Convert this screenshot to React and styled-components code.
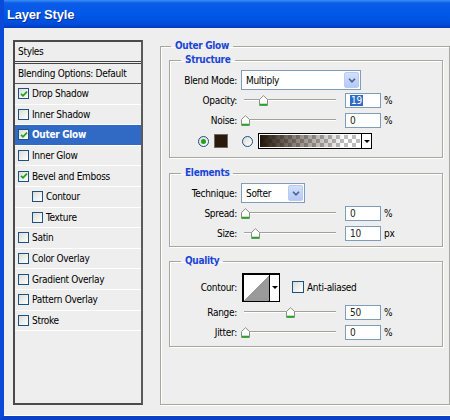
import styled, { createGlobalStyle } from "styled-components";

const GlobalStyle = createGlobalStyle`
  html, body {
    margin: 0;
    padding: 0;
    background: #eeeeee;
  }
  body {
    font-family: "DejaVu Sans Condensed", "DejaVu Sans", sans-serif;
    font-stretch: condensed;
    font-size: 10px;
    letter-spacing: -0.3px;
    color: #000;
  }
  * {
    box-sizing: border-box;
  }
`;

const Window = styled.div`
  width: 450px;
  height: 420px;
  display: flex;
  flex-direction: column;
  background: #eeeeee;
  border-left: 4px solid #0b4ad8;
  border-bottom: 4px solid #0a3fc8;
  overflow: hidden;
`;

const TitleBar = styled.div`
  flex: none;
  height: 28px;
  margin-left: -4px;
  padding-left: 7px;
  display: flex;
  align-items: center;
  background: linear-gradient(
    #3d8ff8 0,
    #0b5ce9 3px,
    #0058e6 55%,
    #004ad9 88%,
    #003bbd 100%
  );
  color: #fff;
  font-family: "Liberation Sans", sans-serif;
  font-stretch: normal;
  font-weight: bold;
  font-size: 13px;
  letter-spacing: -0.2px;
  text-shadow: 1px 1px 0 #0a2f9a;
`;

const Body = styled.div`
  flex: 1;
  display: flex;
  align-items: flex-start;
  padding: 11px 0 0 9px;
  border-bottom: 1px solid #fff;
`;

/* ---- left styles list ---- */

const StylesList = styled.div`
  width: 130px;
  height: 365px;
  margin-top: 1px;
  border: 2px solid #4a4a4a;
  border-right-color: #5a5a5a;
  background: #eeeeee;
`;

const ListHeader = styled.div`
  height: 22px;
  padding-left: 3px;
  display: flex;
  align-items: center;
  border-bottom: 3px double #444;
`;

const BlendRow = styled.div`
  height: 20px;
  padding-left: 3px;
  display: flex;
  align-items: center;
  border-bottom: 1px solid #555;
`;

const StyleRow = styled.div`
  height: 20.6px;
  display: flex;
  align-items: center;
  gap: 3px;
  padding-left: ${(p) => (p.$indent ? 17 : 3)}px;
  border-bottom: 1px solid #fff;
  background: ${(p) => (p.$selected ? "#316ac5" : "transparent")};
  color: ${(p) => (p.$selected ? "#fff" : "#000")};
  font-weight: ${(p) => (p.$selected ? "bold" : "normal")};
`;

const Box = styled.span`
  flex: none;
  width: ${(p) => p.$size || 11}px;
  height: ${(p) => p.$size || 11}px;
  border: 1px solid #1c5180;
  background: linear-gradient(135deg, #dcdcd6, #fff);
  display: flex;
  align-items: center;
  justify-content: center;
`;

const Check = ({ on, size }) => (
  <Box $size={size}>
    {on && (
      <svg width="8" height="8" viewBox="0 0 8 8">
        <path d="M1 3.8 L3 5.8 L7 1.6" fill="none" stroke="#21a121" strokeWidth="1.8" />
      </svg>
    )}
  </Box>
);

/* ---- right panel ---- */

const Group = styled.fieldset`
  margin: ${(p) => p.$top || 0}px 0 0 0;
  padding: 0 ${(p) => p.$padR || 0}px ${(p) => p.$padB || 0}px ${(p) => p.$padL || 0}px;
  min-width: 0;
  border: 1px solid #a7a7a2;
  box-shadow: inset 1px 1px 0 #fff, 1px 1px 0 #fff;
`;

const OuterGroup = styled(Group)`
  flex: none;
  width: 290px;
  height: 366px;
  margin-left: 17px;
`;

const Legend = styled.legend`
  margin-left: ${(p) => p.$offset}px;
  padding: 0 4px;
  line-height: 14px;
  font-size: 10px;
  font-weight: bold;
  color: #1b45d6;
`;

const Row = styled.div`
  height: ${(p) => p.$h || 20}px;
  display: flex;
  align-items: center;
`;

const Label = styled.span`
  width: 67px;
  margin-right: 4px;
  text-align: right;
  white-space: nowrap;
`;

const Combo = styled.div`
  width: ${(p) => p.$w}px;
  height: 20px;
  display: flex;
  align-items: center;
  justify-content: space-between;
  padding-left: 4px;
  border: 1px solid #7f9db9;
  background: #fff;
`;

const ComboButton = styled.span`
  width: 15px;
  height: 16px;
  margin-right: 1px;
  border-radius: 2px;
  border: 1px solid #b9cbf3;
  background: linear-gradient(#d2e0fc, #b4c9f5);
  display: flex;
  align-items: center;
  justify-content: center;
`;

const Chevron = () => (
  <svg width="8" height="5" viewBox="0 0 8 5">
    <path d="M1 0.8 L4 3.8 L7 0.8" fill="none" stroke="#4d6185" strokeWidth="1.6" />
  </svg>
);

const Slider = styled.div`
  position: relative;
  width: 100px;
  height: 20px;

  &::before {
    content: "";
    position: absolute;
    left: 3px;
    right: 5px;
    top: 9px;
    height: 1px;
    background: #a2a29c;
    border-bottom: 1px solid #fff;
    box-sizing: content-box;
  }
`;

const Thumb = styled.svg`
  position: absolute;
  top: 5px;
  left: ${(p) => 4 + p.$pos * 91 - 4.5}px;
`;

const SliderThumb = ({ pos }) => (
  <Thumb $pos={pos} width="9" height="11" viewBox="0 0 9 11">
    <path d="M0.5 10.5 V4.5 L4.5 0.7 L8.5 4.5 V10.5 Z" fill="#fff" stroke="#8d8d88" />
    <path d="M1 9.6 H8" stroke="#1faa1f" strokeWidth="1.8" />
  </Thumb>
);

const NumberBox = styled.div`
  width: 36px;
  height: 15px;
  margin-left: 4px;
  padding-left: 4px;
  border: 1px solid #7f9db9;
  background: #fff;
  display: flex;
  align-items: center;
  color: #222;
`;

const Selected = styled.span`
  background: #316ac5;
  color: #fff;
  padding: 0 1px;
`;

const Unit = styled.span`
  margin-left: 3px;
`;

const SliderRow = ({ label, pos, value, unit, selected }) => (
  <Row>
    <Label>{label}</Label>
    <Slider>
      <SliderThumb pos={pos} />
    </Slider>
    <NumberBox>{selected ? <Selected>{value}</Selected> : value}</NumberBox>
    <Unit>{unit}</Unit>
  </Row>
);

const ColorRow = styled(Row)`
  height: 22px;
  padding-left: 28px;
`;

const Radio = styled.span`
  flex: none;
  width: 11px;
  height: 11px;
  border-radius: 50%;
  border: 1px solid #1c5180;
  background: linear-gradient(135deg, #dcdcd6, #fff);
  margin-right: ${(p) => p.$gap}px;
  display: flex;
  align-items: center;
  justify-content: center;

  &::after {
    content: "";
    width: 5px;
    height: 5px;
    border-radius: 50%;
    background: ${(p) => (p.$on ? "#21a121" : "transparent")};
  }
`;

const Swatch = styled.span`
  width: 14px;
  height: 14px;
  margin-right: 14px;
  background: #2b1a0c;
  border: 1px solid #6d6a64;
`;

const GradientPicker = styled.div`
  width: 114px;
  height: 16px;
  display: flex;
  border: 1px solid #000;
`;

const GradientFill = styled.div`
  flex: 1;
  border: 1px solid #fff;
  background: linear-gradient(to right, #21150a 0%, rgba(43, 26, 12, 0.55) 35%, rgba(43, 26, 12, 0) 85%),
    repeating-conic-gradient(#bdbdbd 0 25%, #fff 0 50%) 0 0 / 8px 8px;
`;

const PickerArrow = styled.div`
  width: 10px;
  border-left: 1px solid #000;
  background: #fff;
  display: flex;
  align-items: center;
  justify-content: center;

  &::after {
    content: "";
    border-left: 3px solid transparent;
    border-right: 3px solid transparent;
    border-top: 3px solid #000;
  }
`;

const ContourPicker = styled.div`
  width: 38px;
  height: 29px;
  margin-left: 1px;
  display: flex;
  border: 1px solid #000;
  border-top-width: 2px;
  border-left-width: 2px;
`;

const ContourPreview = styled.div`
  flex: 1;
  background: linear-gradient(to top left, #9a9a9a 50%, #fff 50%);
`;

const ContourArrow = styled(PickerArrow)`
  align-items: flex-start;
  padding-top: 11px;
`;

const AntiAlias = styled.label`
  display: flex;
  align-items: center;
  gap: 3px;
  margin-left: 12px;
`;

const styleItems = [
  { name: "Drop Shadow", on: true },
  { name: "Inner Shadow" },
  { name: "Outer Glow", on: true, selected: true },
  { name: "Inner Glow" },
  { name: "Bevel and Emboss", on: true },
  { name: "Contour", indent: true },
  { name: "Texture", indent: true },
  { name: "Satin" },
  { name: "Color Overlay" },
  { name: "Gradient Overlay" },
  { name: "Pattern Overlay" },
  { name: "Stroke" },
];

export default function App() {
  return (
    <>
      <GlobalStyle />
      <Window>
        <TitleBar>Layer Style</TitleBar>
        <Body>
          <StylesList>
            <ListHeader>Styles</ListHeader>
            <BlendRow>Blending Options: Default</BlendRow>
            {styleItems.map((s) => (
              <StyleRow key={s.name} $indent={s.indent} $selected={s.selected}>
                <Check on={s.on} />
                {s.name}
              </StyleRow>
            ))}
          </StylesList>

          <OuterGroup $padL={8} $padR={6}>
            <Legend $offset={2}>Outer Glow</Legend>

            <Group $padB={5}>
              <Legend $offset={11}>Structure</Legend>
              <Row style={{ marginTop: 3 }}>
                <Label>Blend Mode:</Label>
                <Combo $w={120}>
                  Multiply
                  <ComboButton>
                    <Chevron />
                  </ComboButton>
                </Combo>
              </Row>
              <SliderRow label="Opacity:" pos={0.2} value="19" unit="%" selected />
              <SliderRow label="Noise:" pos={0} value="0" unit="%" />
              <ColorRow>
                <Radio $on $gap={5} />
                <Swatch />
                <Radio $gap={5} />
                <GradientPicker>
                  <GradientFill />
                  <PickerArrow />
                </GradientPicker>
              </ColorRow>
            </Group>

            <Group $top={8} $padB={3}>
              <Legend $offset={11}>Elements</Legend>
              <Row style={{ marginTop: 3 }}>
                <Label>Technique:</Label>
                <Combo $w={64}>
                  Softer
                  <ComboButton>
                    <Chevron />
                  </ComboButton>
                </Combo>
              </Row>
              <SliderRow label="Spread:" pos={0} value="0" unit="%" />
              <SliderRow label="Size:" pos={0.11} value="10" unit="px" />
            </Group>

            <Group $top={7} $padB={4}>
              <Legend $offset={11}>Quality</Legend>
              <Row $h={30} style={{ marginTop: 4 }}>
                <Label>Contour:</Label>
                <ContourPicker>
                  <ContourPreview />
                  <ContourArrow />
                </ContourPicker>
                <AntiAlias>
                  <Check size={12} />
                  Anti-aliased
                </AntiAlias>
              </Row>
              <SliderRow label="Range:" pos={0.5} value="50" unit="%" />
              <SliderRow label="Jitter:" pos={0} value="0" unit="%" />
            </Group>
          </OuterGroup>
        </Body>
      </Window>
    </>
  );
}
